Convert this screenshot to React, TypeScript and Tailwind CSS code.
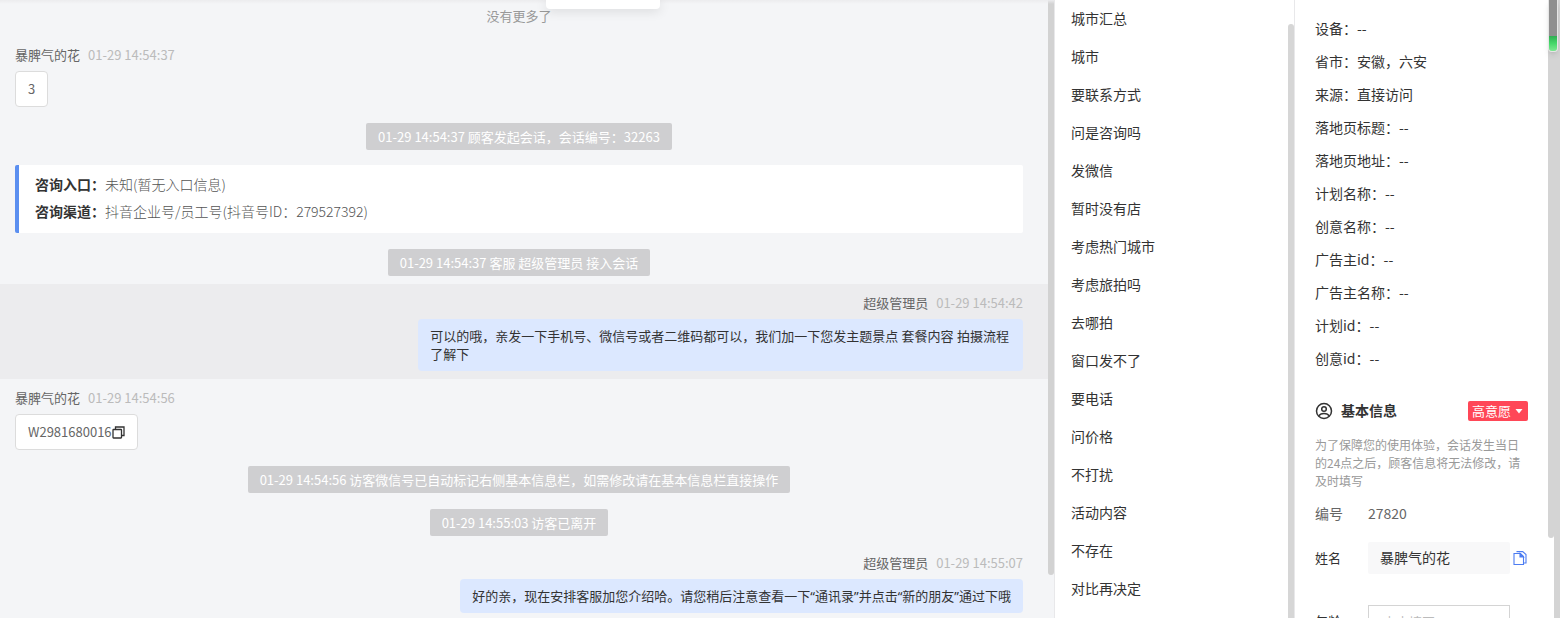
import type { ReactNode } from 'react';

const quickReplies = [
  '城市汇总',
  '城市',
  '要联系方式',
  '问是咨询吗',
  '发微信',
  '暂时没有店',
  '考虑热门城市',
  '考虑旅拍吗',
  '去哪拍',
  '窗口发不了',
  '要电话',
  '问价格',
  '不打扰',
  '活动内容',
  '不存在',
  '对比再决定',
];

const visitorInfo = [
  { label: '设备', value: '--' },
  { label: '省市', value: '安徽，六安' },
  { label: '来源', value: '直接访问' },
  { label: '落地页标题', value: '--' },
  { label: '落地页地址', value: '--' },
  { label: '计划名称', value: '--' },
  { label: '创意名称', value: '--' },
  { label: '广告主id', value: '--' },
  { label: '广告主名称', value: '--' },
  { label: '计划id', value: '--' },
  { label: '创意id', value: '--' },
];

function SystemNotice({ children }: { children: ReactNode }) {
  return (
    <div className="flex justify-center py-2">
      <p className="rounded-xs bg-[#cfcfd1] px-3 text-[13px] leading-[27px] text-white">{children}</p>
    </div>
  );
}

function MessageHeader({ name, time }: { name: string; time: string }) {
  return (
    <div className="mb-[7px] flex gap-2 text-[13px] leading-[18px]">
      <span className="text-[#666]">{name}</span>
      <time className="text-[#bbb]">{time}</time>
    </div>
  );
}

function VisitorMessage({ time, children }: { time: string; children: ReactNode }) {
  return (
    <article className="flex flex-col items-start pt-[10px] pr-[25px] pb-2 pl-[15px]">
      <MessageHeader name="暴脾气的花" time={time} />
      <div className="flex items-center rounded-sm border border-[#dcdcdc] bg-white px-3 py-2 text-[13px] leading-[18px] text-[#666]">
        {children}
      </div>
    </article>
  );
}

function AgentMessage({ time, active, children }: { time: string; active?: boolean; children: ReactNode }) {
  return (
    <article
      className={`flex flex-col items-end pt-[10px] pr-[25px] pb-2 pl-[15px] ${active ? 'bg-[#ececee]' : ''}`}
    >
      <MessageHeader name="超级管理员" time={time} />
      <div className="max-w-[60%] rounded-sm bg-[#dce8ff] px-3 py-2 font-['Noto_Sans','Noto_Sans_CJK_SC',sans-serif] text-[13px] leading-[18px] text-[#333]">
        {children}
      </div>
    </article>
  );
}

function ChatPanel() {
  return (
    <main className="relative flex min-w-0 flex-1 overflow-hidden bg-[#f4f5f7]">
      <div className="pointer-events-none absolute inset-x-0 top-0 h-1 bg-linear-to-b from-[#ececee] to-transparent" />
      <div className="absolute top-0 left-[51.8%] h-[9px] w-[114px] rounded-b-sm bg-white shadow-[0_2px_12px_rgba(0,0,0,0.12)]" />

      <div className="min-w-0 flex-1">
        <p className="pr-[25px] pb-1 pl-[15px] text-center text-[13px] leading-8 text-[#999]">没有更多了</p>

        <VisitorMessage time="01-29 14:54:37">3</VisitorMessage>
        <div className="pr-[25px] pl-[15px]">
          <SystemNotice>01-29 14:54:37 顾客发起会话，会话编号：32263</SystemNotice>
          <div className="pt-[7px] pb-2">
            <dl className="rounded-xs border-l-4 border-[#5b8ff0] bg-white px-4 pt-[6px] pb-2 text-sm leading-[27px]">
              <div className="flex">
                <dt className="font-bold text-[#333]">咨询入口：</dt>
                <dd className="font-light text-[#555]">未知(暂无入口信息)</dd>
              </div>
              <div className="flex">
                <dt className="font-bold text-[#333]">咨询渠道：</dt>
                <dd className="font-light text-[#555]">抖音企业号/员工号(抖音号ID：279527392)</dd>
              </div>
            </dl>
          </div>
          <SystemNotice>01-29 14:54:37 客服 超级管理员 接入会话</SystemNotice>
        </div>

        <AgentMessage time="01-29 14:54:42" active>
          可以的哦，亲发一下手机号、微信号或者二维码都可以，我们加一下您发主题景点 套餐内容 拍摄流程了解下
        </AgentMessage>

        <VisitorMessage time="01-29 14:54:56">
          W2981680016
          <button type="button" aria-label="复制" className="text-[#333]">
            <svg viewBox="0 0 13 13" className="size-[13px]" fill="none" stroke="currentColor" strokeWidth="1.3">
              <rect x="1" y="3.500" width="8.500" height="8.500" rx="0.5" />
              <path d="M3.500 3.500V1h8.500v8.500H9.500" />
            </svg>
          </button>
        </VisitorMessage>
        <div className="pr-[25px] pl-[15px]">
          <SystemNotice>01-29 14:54:56 访客微信号已自动标记右侧基本信息栏，如需修改请在基本信息栏直接操作</SystemNotice>
          <SystemNotice>01-29 14:55:03 访客已离开</SystemNotice>
        </div>

        <AgentMessage time="01-29 14:55:07">
          好的亲，现在安排客服加您介绍哈。请您稍后注意查看一下“通讯录”并点击“新的朋友”通过下哦
        </AgentMessage>
      </div>

      {/* Scrollbar */}
      <div className="w-[6px]">
        <div className="h-[93vh] rounded-b-full bg-[#d2d2d2]" />
      </div>
    </main>
  );
}

function QuickReplyPanel() {
  return (
    <aside className="flex w-60 shrink-0 border-l border-[#e8e8ea] bg-white">
      <ul className="min-w-0 flex-1 pl-4 text-sm leading-9 text-[#333]">
        {quickReplies.map((reply) => (
          <li key={reply} className="pb-[2px]">
            <button type="button">{reply}</button>
          </li>
        ))}
      </ul>
      <div className="w-[6px] pt-6">
        <div className="h-full rounded-t-full bg-[#d6d6d6]" />
      </div>
    </aside>
  );
}

function VisitorPanel() {
  return (
    <aside className="relative flex w-[266px] shrink-0 border-l border-[#e8e8ea] bg-white">
      <div className="min-w-0 flex-1 pt-3 pr-5 pl-5">
        <dl className="text-sm leading-[33px] text-[#333]">
          {visitorInfo.map(({ label, value }) => (
            <div key={label} className="flex">
              <dt>{label}：</dt>
              <dd>{value}</dd>
            </div>
          ))}
        </dl>

        <div className="mt-[26px] flex items-center">
          <svg
            viewBox="0 0 18 18"
            className="mr-2 size-[18px] text-[#333]"
            fill="none"
            stroke="currentColor"
            strokeWidth="1.5"
          >
            <circle cx="9" cy="9" r="7.500" />
            <circle cx="9" cy="7" r="2.300" />
            <path d="M3.800 14c1-2 2.900-2.600 5.200-2.600s4.200.6 5.200 2.600" />
          </svg>
          <h2 className="pb-[2px] text-sm leading-[18px] font-bold text-[#333]">基本信息</h2>
          <button
            type="button"
            className="ml-auto flex h-5 items-center gap-1 rounded-xs bg-[#ff4757] px-1 text-[13px] text-white"
          >
            高意愿
            <svg viewBox="0 0 9 5" className="h-[5px] w-[9px]" fill="currentColor">
              <path d="M0.500 0h7L4 4.500z" />
            </svg>
          </button>
        </div>

        <p className="mt-[15px] text-xs leading-[18px] text-[#999]">
          为了保障您的使用体验，会话发生当日的24点之后，顾客信息将无法修改，请及时填写
        </p>

        <div className="mt-3 flex text-sm leading-[22px] text-[#666]">
          <span className="w-[53px]">编号</span>
          <span>27820</span>
        </div>

        <div className="mt-[18px] flex items-center">
          <label htmlFor="visitor-name" className="w-[53px] text-[13px] text-[#333]">
            姓名
          </label>
          <input
            id="visitor-name"
            defaultValue="暴脾气的花"
            className="h-8 w-[142px] rounded-xs bg-[#f8f8f9] px-3 pb-[2px] text-sm text-[#333]"
          />
          <button type="button" aria-label="复制姓名" className="ml-[3px] text-[#4d7df2]">
            <svg viewBox="0 0 14 14" className="size-[14px]" fill="none" stroke="currentColor" strokeWidth="1.1">
              <path d="M1 2.500h6.500L10.500 5.500v8H1z" />
              <path d="M7 2.500V6h3.500z" fill="currentColor" />
              <path d="M3.500 0.600h6.200L13 3.600v8.400h-2.500" />
            </svg>
          </button>
        </div>

        <div className="mt-[31px] flex items-center">
          <label htmlFor="visitor-age" className="w-[53px] text-[13px] text-[#333]">
            年龄
          </label>
          <input
            id="visitor-age"
            placeholder="点击填写"
            className="h-8 w-[142px] border border-[#d4d4d4] px-[14px] text-[13px] placeholder:text-[#bbb]"
          />
        </div>
      </div>

      {/* Panel scrollbar next to the page one */}
      <div className="w-[6px]">
        <div className="h-[87vh] rounded-b-full bg-[#d4d4d4]" />
      </div>
      <div className="w-[6px] bg-[#d4d4d4]" />

      <div className="absolute top-0 right-[2px] flex h-[52px] w-[10px] flex-col overflow-hidden rounded-b-sm border-x border-b border-[#e6e6e6] shadow-md">
        <div className="flex-1 bg-[#8f8f8f]" />
        <div className="h-[15px] bg-linear-to-b from-[#2fae52] via-[#45d86a] to-[#7be892]" />
      </div>
    </aside>
  );
}

export default function App() {
  return (
    <div className="flex h-screen overflow-hidden bg-white font-['Noto_Sans_CJK_SC',sans-serif]">
      <ChatPanel />
      <QuickReplyPanel />
      <VisitorPanel />
    </div>
  );
}
